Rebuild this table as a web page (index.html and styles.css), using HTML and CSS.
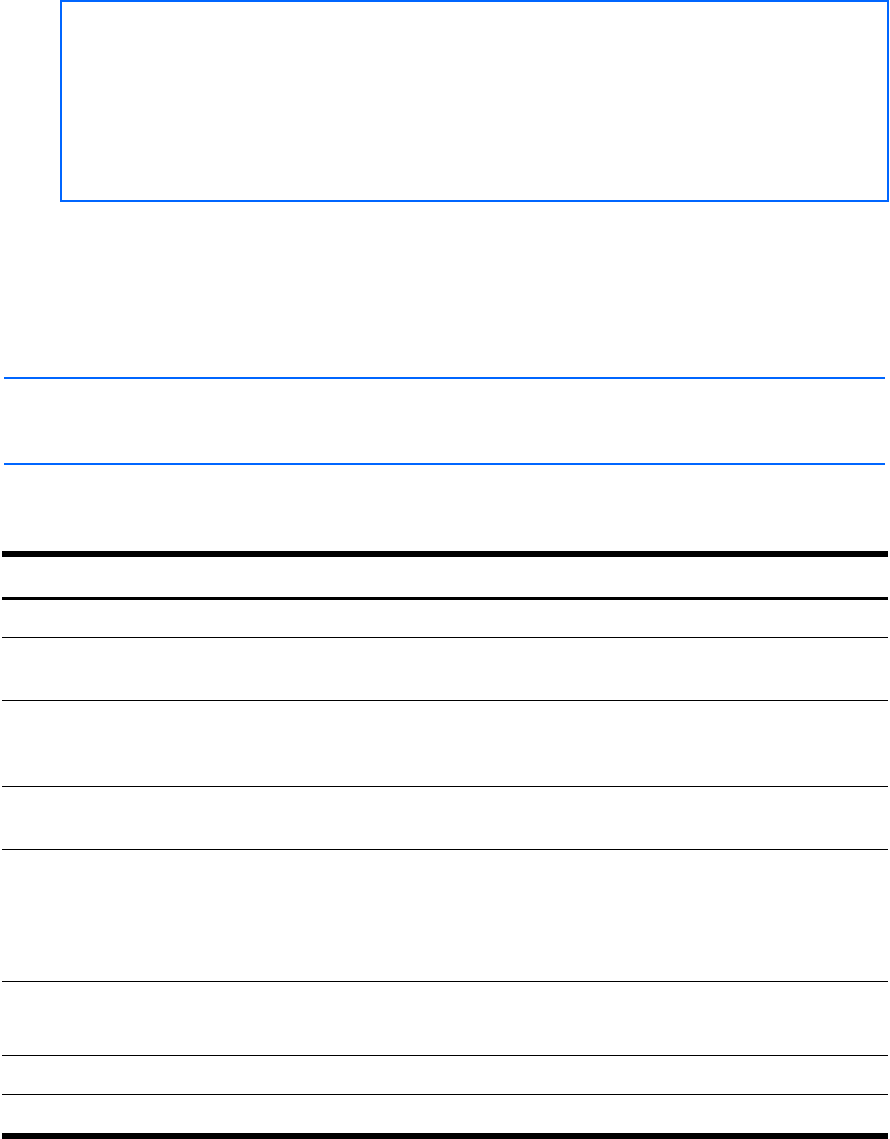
FILE: index.html
```html
<!DOCTYPE html>
<html lang="en">
<head>
    <meta charset="UTF-8">
    <meta name="viewport" content="width=device-width, initial-scale=1.0">
    <title>Page</title>
    <link rel="stylesheet" href="styles.css">
</head>
<body>
    <!-- framed box at the top -->
    <div class="frame-box"></div>

    <!-- band between two blue rules -->
    <div class="rule-band"></div>

    <!-- table outline -->
    <div class="data-table">
        <div class="table-head"></div>
        <div class="table-row h-37"></div>
        <div class="table-row h-62"></div>
        <div class="table-row h-85"></div>
        <div class="table-row h-62"></div>
        <div class="table-row h-131"></div>
        <div class="table-row h-73"></div>
        <div class="table-row h-38"></div>
        <div class="table-row last h-38"></div>
    </div>
</body>
</html>
```

FILE: styles.css
```css
body {
    font-family: "Liberation Sans", Arial, sans-serif;
    background-color: #fff;
    margin: 0;
    padding: 0;
    color: #000;
}

.frame-box {
    height: 198px;
    margin-left: 60px;
    margin-right: 1px;
    border: 2px solid #0066ff;
}

.rule-band {
    height: 84px;
    margin: 175px 5px 0 4px;
    border-top: 2px solid #0066ff;
    border-bottom: 2px solid #0066ff;
}

/* table */
.data-table {
    margin: 86px 2px 0 2px;
    border-top: 6px solid #000;
    border-bottom: 6px solid #000;
}

.table-head {
    height: 40px;
    border-bottom: 3px solid #000;
}

.table-row {
    border-bottom: 1px solid #000;
}

.table-row.last {
    border-bottom: none;
}

.h-37 { height: 37px; }
.h-38 { height: 38px; }
.h-62 { height: 62px; }
.h-73 { height: 73px; }
.h-85 { height: 85px; }
.h-131 { height: 131px; }
```
